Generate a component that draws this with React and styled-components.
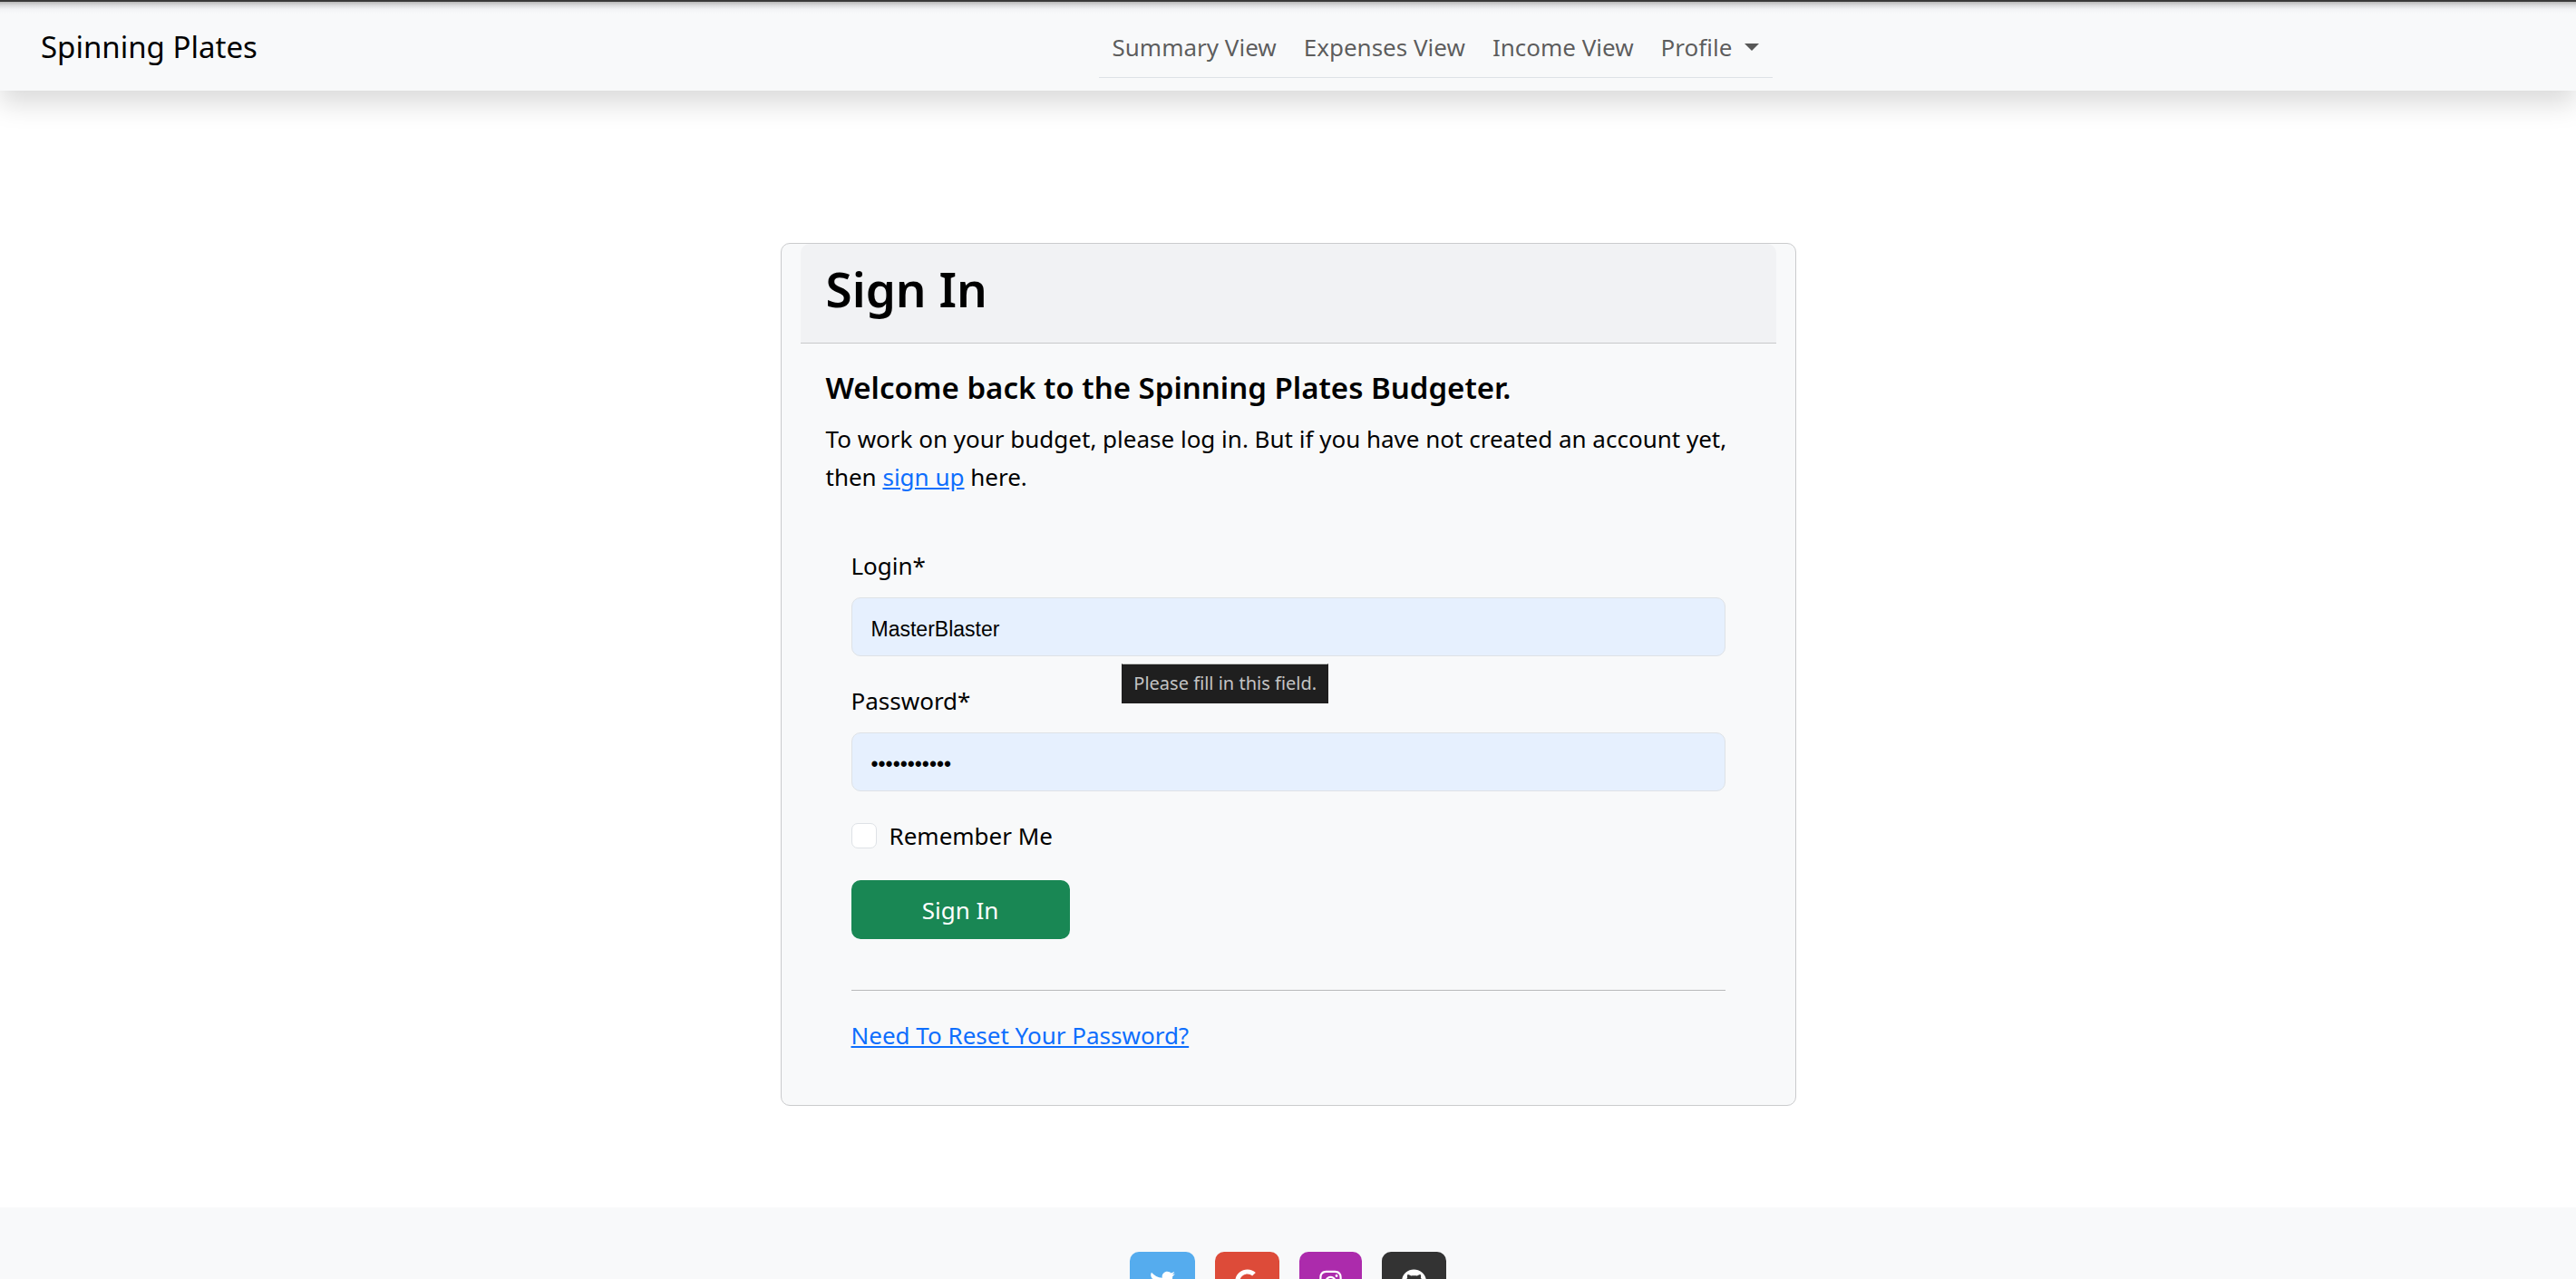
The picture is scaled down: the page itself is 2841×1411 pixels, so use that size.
import React from "react";
import styled, { createGlobalStyle } from "styled-components";
import { FaTwitter, FaGoogle, FaInstagram, FaGithub } from "react-icons/fa";

const GlobalStyle = createGlobalStyle`
  *, *::before, *::after { box-sizing: border-box; }
  body {
    margin: 0;
    background: #fff;
    color: #000;
    font-family: "Noto Sans", "Open Sans", sans-serif;
    font-size: 26px;
    line-height: 42px;
  }
`;

const Page = styled.div`
  height: 100vh;
  overflow: hidden;
  display: flex;
  flex-direction: column;
`;

const Navbar = styled.header`
  display: flex;
  align-items: flex-start;
  flex-shrink: 0;
  padding: 17px 0 14px 45px;
  border-top: 2px solid #3a3a3a;
  background: linear-gradient(#b8b8b8, #dcdddf 4px, #f2f3f5 8px, #f8f9fa 13px);
  box-shadow: 0 14px 28px rgba(0, 0, 0, 0.15);
`;

const Brand = styled.a`
  padding-top: 12px;
  padding-right: 42px;
  font-size: 33px;
  color: #000;
  text-decoration: none;
`;

const Nav = styled.nav`
  flex: 1;
  display: flex;
  justify-content: center;
`;

const NavList = styled.ul`
  display: flex;
  margin: 0;
  padding: 0;
  list-style: none;
  border-bottom: 1px solid #dee2e6;
`;

const NavLink = styled.a`
  display: flex;
  align-items: center;
  gap: 14px;
  padding: 12px 15px;
  color: rgba(0, 0, 0, 0.65);
  text-decoration: none;
`;

const Caret = styled.span`
  border-top: 8px solid;
  border-left: 8px solid transparent;
  border-right: 8px solid transparent;
`;

const Main = styled.main`
  flex-shrink: 0;
  padding: 168px 28px 112px;
`;

const Card = styled.section`
  max-width: 1120px;
  margin: 0 auto;
  padding: 0 21px;
  border: 1px solid #cacbcd;
  border-radius: 10px;
  background: #f8f9fa;
`;

const CardHeader = styled.div`
  padding: 16px 28px 26px;
  border-bottom: 1px solid #c8c9ca;
  border-radius: 10px 10px 0 0;
  background: #f1f2f4;
`;

const Title = styled.h1`
  margin: 0;
  font-size: 53px;
  font-weight: 600;
  line-height: 67px;
`;

const CardBody = styled.div`
  padding: 28px;
`;

const Subtitle = styled.h2`
  margin: 0 0 14px;
  font-size: 33px;
  font-weight: 600;
  line-height: 42px;
`;

const Intro = styled.p`
  margin: 0 0 28px;
`;

const Link = styled.a`
  color: #0d6efd;
  text-decoration: underline;
`;

const Form = styled.form`
  display: flex;
  flex-direction: column;
  gap: 28px;
  padding: 28px 28px 0;
`;

const Field = styled.div`
  position: relative;
  display: flex;
  flex-direction: column;
  gap: 14px;
`;

const Input = styled.input`
  width: 100%;
  height: 65px;
  padding: 6px 21px 0;
  border: 1px solid #dee2e6;
  border-radius: 10px;
  background: #e6f0fe;
  color: #000;
  font-family: "Liberation Sans", Arial, sans-serif;
  font-size: 23px;
`;

const Tooltip = styled.span`
  position: absolute;
  top: calc(100% + 8px);
  left: 31%;
  z-index: 1;
  padding: 0 12px;
  border: 1px solid #1f1f1f;
  border-top-color: #c8cac8;
  background: #1f1f1f;
  color: #c4c4c4;
  font-size: 20px;
  white-space: nowrap;
`;

const CheckRow = styled.div`
  display: flex;
  align-items: center;
  gap: 14px;
`;

const Checkbox = styled.input`
  appearance: none;
  width: 28px;
  height: 28px;
  margin: 0;
  border: 1px solid #dee2e6;
  border-radius: 7px;
  background: #fff;
`;

const SubmitButton = styled.button`
  width: 25%;
  height: 65px;
  padding: 0;
  border: 0;
  border-radius: 10px;
  background: #198754;
  color: #fff;
  font: inherit;
`;

const ResetRow = styled.div`
  margin: 56px 28px 0;
  padding: 28px 0;
  border-top: 1px solid #b9babb;
`;

const Footer = styled.footer`
  flex-shrink: 0;
  display: flex;
  justify-content: center;
  gap: 22px;
  padding: 49px 28px;
  background: #f8f9fa;
`;

const SocialLink = styled.a`
  display: flex;
  align-items: center;
  height: 65px;
  padding: 0 22px;
  border-radius: 10px;
  background: ${(p) => p.$color};
  color: #fff;

  svg {
    width: ${(p) => p.$iconWidth}px;
    height: 28px;
  }
`;

const navItems = ["Summary View", "Expenses View", "Income View"];

const socials = [
  { name: "Twitter", color: "#55acee", iconWidth: 28, Icon: FaTwitter },
  { name: "Google", color: "#dd4b39", iconWidth: 27, Icon: FaGoogle },
  { name: "Instagram", color: "#ac2bac", iconWidth: 25, Icon: FaInstagram },
  { name: "GitHub", color: "#333333", iconWidth: 27, Icon: FaGithub },
];

export default function App() {
  return (
    <Page>
      <GlobalStyle />
      <Navbar>
        <Brand href="#">Spinning Plates</Brand>
        <Nav>
          <NavList>
            {navItems.map((item) => (
              <li key={item}>
                <NavLink href="#">{item}</NavLink>
              </li>
            ))}
            <li>
              <NavLink href="#">
                Profile
                <Caret />
              </NavLink>
            </li>
          </NavList>
        </Nav>
      </Navbar>
      <Main>
        <Card>
          <CardHeader>
            <Title>Sign In</Title>
          </CardHeader>
          <CardBody>
            <Subtitle>Welcome back to the Spinning Plates Budgeter.</Subtitle>
            <Intro>
              To work on your budget, please log in. But if you have not created an account yet, then{" "}
              <Link href="#">sign up</Link> here.
            </Intro>
            <Form onSubmit={(e) => e.preventDefault()}>
              <Field>
                <label htmlFor="login">Login*</label>
                <Input id="login" type="text" defaultValue="MasterBlaster" required />
                <Tooltip role="tooltip">Please fill in this field.</Tooltip>
              </Field>
              <Field>
                <label htmlFor="password">Password*</label>
                <Input id="password" type="password" defaultValue="platespin11" required />
              </Field>
              <CheckRow>
                <Checkbox id="remember" type="checkbox" />
                <label htmlFor="remember">Remember Me</label>
              </CheckRow>
              <SubmitButton type="submit">Sign In</SubmitButton>
            </Form>
            <ResetRow>
              <Link href="#">Need To Reset Your Password?</Link>
            </ResetRow>
          </CardBody>
        </Card>
      </Main>
      <Footer>
        {socials.map(({ name, color, iconWidth, Icon }) => (
          <SocialLink key={name} href="#" aria-label={name} $color={color} $iconWidth={iconWidth}>
            <Icon />
          </SocialLink>
        ))}
      </Footer>
    </Page>
  );
}
